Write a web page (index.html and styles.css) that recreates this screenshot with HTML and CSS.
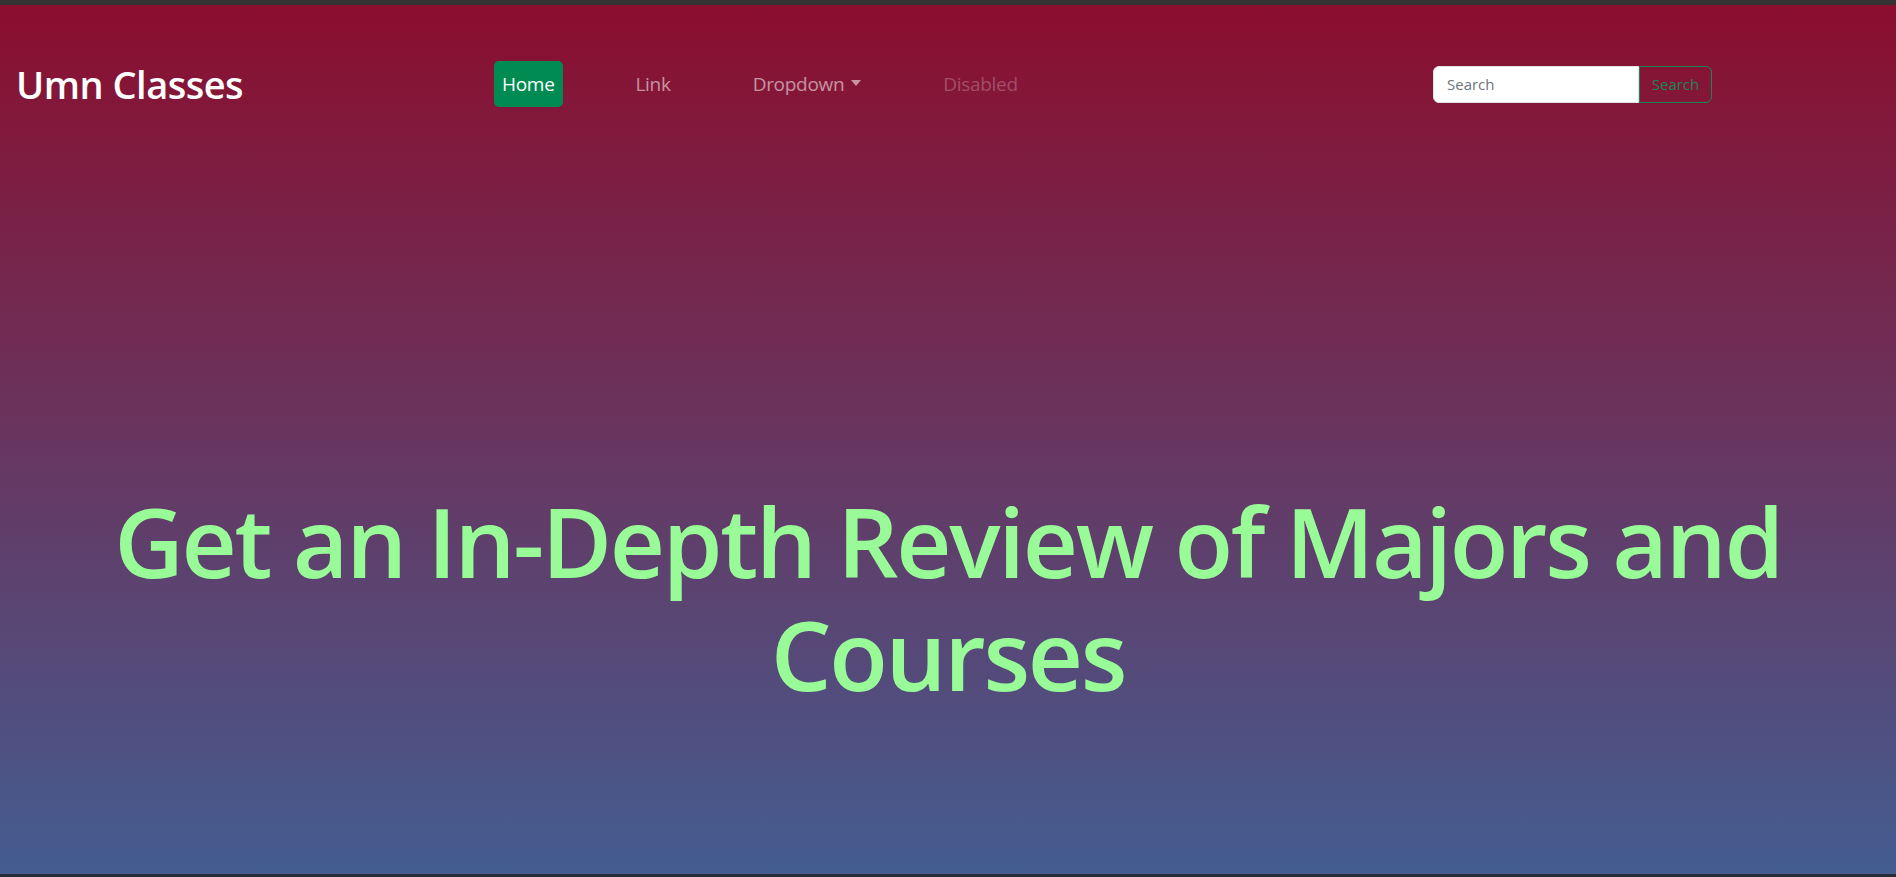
FILE: index.html
```html
<!DOCTYPE html>
<html lang="en">
<head>
<meta charset="utf-8">
<title>Umn Classes</title>
<link rel="stylesheet" href="styles.css">
</head>
<body>
<div class="chrome-top"></div>
<div class="page">
  <nav class="navbar">
    <a class="brand" href="#">Umn Classes</a>
    <ul class="nav-list">
      <li><a class="nav-link active" href="#">Home</a></li>
      <li><a class="nav-link" href="#">Link</a></li>
      <li><a class="nav-link dropdown" href="#">Dropdown<span class="caret"></span></a></li>
      <li><a class="nav-link disabled" href="#">Disabled</a></li>
    </ul>
    <form class="search">
      <input class="search-input" type="search" placeholder="Search">
      <button class="search-btn" type="button">Search</button>
    </form>
  </nav>
  <main class="hero">
    <h1 class="hero-title">Get an In-Depth Review of Majors and Courses</h1>
  </main>
</div>
<div class="chrome-bottom"></div>
</body>
</html>
```
FILE: styles.css
```css
* { box-sizing: border-box; }
html, body { margin: 0; padding: 0; height: 100%; }
body {
  font-family: "Open Sans", "Noto Sans", sans-serif;
  background: #333333;
  display: flex;
  flex-direction: column;
  overflow: hidden;
}
.chrome-top { height: 5px; background: #333333; flex: 0 0 5px; }
.chrome-bottom { height: 3px; background: #262b38; flex: 0 0 3px; }
.page {
  flex: 1 1 auto;
  display: flex;
  flex-direction: column;
  background: linear-gradient(180deg, #8b0e2e 0%, #445d91 100%);
}
.navbar {
  display: flex;
  align-items: center;
  padding: 56px 184px 0 16px;
  height: 102px;
}
.brand {
  flex: 0 0 478px;
  color: #ffffff;
  text-decoration: none;
  font-size: 38px;
  font-weight: 600;
  letter-spacing: -0.5px;
  line-height: 1;
}
.nav-list {
  display: flex;
  align-items: center;
  gap: 64px;
  list-style: none;
  margin: 0;
  padding: 0;
}
.nav-link {
  display: flex;
  align-items: center;
  padding: 8px 9px;
  font-size: 19px;
  letter-spacing: -0.3px;
  line-height: 30px;
  color: rgba(255, 255, 255, 0.55);
  text-decoration: none;
  border-radius: 5px;
}
.nav-link.active { background: #008b52; color: #ffffff; padding: 8px 8px; }
.nav-link.disabled { color: rgba(255, 255, 255, 0.25); }
.caret {
  display: inline-block;
  margin-left: 7px;
  margin-top: -2px;
  width: 0;
  height: 0;
  border-left: 5.5px solid transparent;
  border-right: 5.5px solid transparent;
  border-top: 6px solid rgba(255, 255, 255, 0.55);
}
.search {
  margin-left: auto;
  display: flex;
  height: 37px;
}
.search-input {
  width: 206px;
  height: 37px;
  border: 1px solid #dee2e6;
  border-radius: 6px 0 0 6px;
  padding: 0 13px;
  font-family: inherit;
  font-size: 15px;
  color: #212529;
  background: #ffffff;
  outline: none;
}
.search-input::placeholder { color: #6c757d; }
.search-btn {
  width: 73px;
  height: 37px;
  border: 1px solid #198754;
  border-radius: 0 6px 6px 0;
  background: transparent;
  color: #198754;
  font-family: inherit;
  font-size: 15px;
  padding: 0;
}
.hero {
  flex: 1 1 auto;
  display: flex;
  justify-content: center;
  padding: 377px 80px 0;
}
.hero-title {
  margin: 0;
  text-align: center;
  color: #98fb98;
  font-size: 96px;
  font-weight: 600;
  line-height: 113px;
  letter-spacing: -2.3px;
  max-width: 1720px;
}
```
